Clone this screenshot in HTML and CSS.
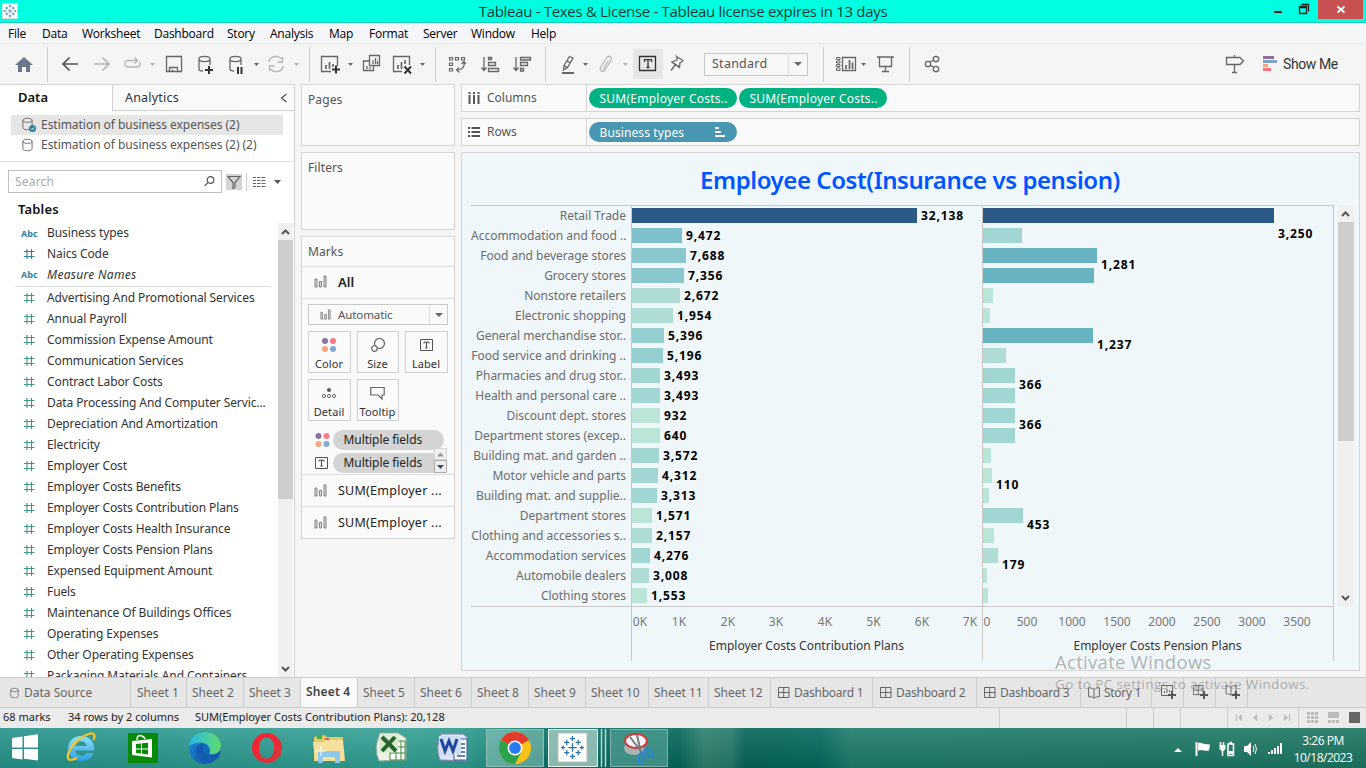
FILE: index.html
```html
<!DOCTYPE html>
<html lang="en">
<head>
<meta charset="utf-8">
<title>Tableau - Texes &amp; License</title>
<link rel="stylesheet" href="styles.css">
</head>
<body>
<svg width="0" height="0" class="defs">
  <defs>
    <symbol id="cyl" viewBox="0 0 12 14"><path d="M1 3v8c0 3 10 3 10 0V3M1 3c0-3 10-3 10 0S1 6 1 3z" fill="none" stroke="#666"/></symbol>
    <symbol id="hash" viewBox="0 0 12 12"><path d="M4 1v10M8.500 1v10M1 3.500h10.500M1 8.500h10.500" fill="none" stroke="currentColor" stroke-width="1.100"/></symbol>
    <symbol id="bars" viewBox="0 0 13 13"><path d="M1 4h2v8H1zM5.500 6.500h2v5.500h-2zM10 1h2v11h-2z" fill="#ddd" stroke="#777" stroke-width=".9"/></symbol>
    <symbol id="dash" viewBox="0 0 12 12"><path d="M.5.5h10.500v10H.5zM5.700.5v10M.5 5.500H11" fill="none" stroke="#666"/></symbol>
    <symbol id="book" viewBox="0 0 12 12"><path d="M6 2.500C4 1 2 .7.6.7v9c2 0 4 .3 5.400 1.500 1.400-1.200 3.400-1.500 5.400-1.500v-9C9.500.7 7.500 1 6 2.500zv8.500" fill="none" stroke="#666"/></symbol>
    <symbol id="plus" viewBox="0 0 8 8"><path d="M4 0v8M0 4h8" stroke="#555" stroke-width="2"/></symbol>
    <symbol id="dots" viewBox="0 0 14 14"><circle cx="3" cy="3" r="3" fill="#8b739e"/><circle cx="11" cy="3" r="3" fill="#fb7a87"/><circle cx="3" cy="11" r="3" fill="#f4a77e"/><circle cx="11" cy="11" r="3" fill="#84a8d0"/></symbol>
    <symbol id="tbox" viewBox="0 0 13 12"><path d="M.5.5h12v11H.5z" fill="none" stroke="#555"/><path d="M4 4.500V3.200h5v1.300M6.500 3.200v5.600M5.300 9h2.400" fill="none" stroke="#444"/></symbol>
    <symbol id="tab" viewBox="0 0 24 24"><path d="M12 8v8M8 12h8M12 1v5M9.500 3.500h5M12 18v5M9.500 20.500h5M1 12h4M3 10v4M19 12h4M21 10v4M6.500 4.500v5M4 7h5M17.500 4.500v5M15 7h5M6.500 14.500v5M4 17h5M17.500 14.500v5M15 17h5" fill="none" stroke="#2a72a8" stroke-width="1.200"/></symbol>
  </defs>
</svg>

<div class="titlebar">
  <svg class="appicon" width="16" height="16"><rect width="16" height="16" fill="#fff" stroke="#9bb"/><svg x="1" y="1" width="14" height="14"><use href="#tab"/></svg></svg>
  <span class="apptitle">Tableau - Texes &amp; License - Tableau license expires in 13 days</span>
  <svg class="winbtns" width="96" height="20" viewBox="1270 0 96 20"><path d="M1274 11h8v2h-8z" fill="#222"/><path d="M1299.500 6.500h7v7h-7zM1302 5V4.500h6.500v7M1299 7.500h8" fill="none" stroke="#222" stroke-width="1.300"/><path d="M1318 0h45v19h-45z" fill="#c75050"/><path d="M1337.500 6.500l7 6M1344.500 6.500l-7 6" stroke="#fff" stroke-width="1.900"/></svg>
</div>
<nav class="menu"><span class="w1">File</span><span class="w2">Data</span><span class="w3">Worksheet</span><span class="w4">Dashboard</span><span class="w5">Story</span><span class="w6">Analysis</span><span class="w7">Map</span><span class="w8">Format</span><span class="w9">Server</span><span class="w10">Window</span><span>Help</span></nav>

<div class="toolbar">
  <svg width="704" height="40" viewBox="0 44 704 40" fill="none" stroke="#666" stroke-width="1.300">
    <path d="M47.500 47v35M309.500 47v35M435.500 47v35M545.500 47v35" stroke="#ccc" stroke-width="1"/>
    <path d="M24 57l9 8h-3v7h-4v-5h-4v5h-4v-7h-3z" fill="#69788a" stroke="none"/>
    <path d="M78 64H63M69.500 57.500L63 64l6.500 6.500" stroke="#555" stroke-width="1.700"/>
    <g stroke="#b3b3b3"><path d="M94 64h15M102.500 57.500L109 64l-6.500 6.500" stroke-width="1.600"/><path d="M131 60.500h-4a3.500 3.500 0 0 0 0 6.500h10a3 3 0 0 0 2.500-5M130 60.500h7M134.500 57.500l3 3-3 3"/><path d="M268.500 62a7.500 7.500 0 0 1 13-3M283.500 66a7.500 7.500 0 0 1-13 3M282.500 57v5h-5M269.500 71v-5h5"/></g>
    <path d="M150 63h5l-2.500 3zM294 63h5l-2.500 3zM623 63h5l-2.500 3z" fill="#b3b3b3" stroke="none"/>
    <path d="M254 63h5l-2.500 3zM348 63h5l-2.500 3zM420 63h5l-2.500 3zM583 63h5l-2.500 3z" fill="#666" stroke="none"/>
    <path d="M166.500 56.500h15v15h-15zM169.500 71v-3.500h8V71M172.500 71v-1.500"/>
    <path d="M199 59v10c0 1 1 2 4 2M210 59v6M199 59c0-3.500 11-3.500 11 0s-11 3.500-11 0z"/><path d="M209 66v8M205 70h8" stroke="#333" stroke-width="2"/>
    <path d="M230 59v10c0 1 1 2 4 2M241 59v6M230 59c0-3.500 11-3.500 11 0s-11 3.500-11 0z"/><path d="M238 67v7M241.500 67v7" stroke="#333" stroke-width="2"/>
    <path d="M331 71.500h-9.500v-15h16V66"/><path d="M326 65v4M329.500 62v7M333 64v3" stroke-width="1.700"/><path d="M336 65.500v8M332 69.500h8" stroke="#333" stroke-width="2"/>
    <path d="M369.500 55.500h10v10h-10zM369 61h-5.500v9.500h10V66M367 66v3M370 67v2M373 60v4M375.500 58v6M377.500 61v3"/>
    <path d="M402 71.500h-8.500v-15h16V65"/><path d="M398 65v4M401.500 62v7M405 60v4" stroke-width="1.700"/><path d="M404.500 66.500l6.500 7M411 66.500l-6.500 7" stroke="#333" stroke-width="2"/>
    <path d="M449.500 57.500h3v2.500h-3zM455.500 57.500h3v2.500h-3zM461.500 57.500h3v2.500h-3zM449.500 63h3v2.500h-3zM449.500 68.500h3V71h-3zM464 62c1 5-2 8-7 8M461.500 64l2.500-2.500 2 2.500M459 67.500l-2.500 2.500 3 2.500" stroke-width="1.200"/>
    <path d="M484 57v13M481.500 67.500l2.500 3 2.500-3M488.500 57.500h3v2h-3zM488.500 62.500h7v3h-7zM488.500 68.500h10v3h-10z"/>
    <path d="M516 57v13M513.500 67.500l2.500 3 2.500-3M520.500 57.500h10v2.500h-10zM520.500 62.500h7v3h-7zM520.500 68.500h3v2.500h-3z"/>
    <path d="M564 65.500l5.500-9 3.500 1.500-5.500 9.500zM564 65.500l-.5 4.500 4-2.500M567 61l3.500 2"/><path d="M562 73h12" stroke-width="2"/>
    <path d="M608.500 60.500l-4.500 7c-1 1.500 1 2.500 2 1l5-8c2-3.500-2.500-5.500-4.500-2.500l-5.500 8.500c-2.500 4 2.500 6.500 4.500 3.500" stroke="#b3b3b3" stroke-width="1.200"/>
    <path d="M633 49h30v30h-30z" fill="#e6e6e6" stroke="none"/><path d="M639.500 56.500h16v14h-16z" stroke="#333"/><path d="M644.500 62v-2.300h7V62M648 60v7.500M646.500 67.500h3" stroke="#333"/>
    <path d="M676.500 56.500l6.500 4-1.500 1.500-1.500.5-.5 4.500-7.500-5 4-1.500 1.500-2zM675.500 64.500l-4.500 6M671.500 62l8.500 6"/>
  </svg>
  <div class="select"><span>Standard</span><i><b class="caret"></b></i></div>
  <svg width="472" height="40" viewBox="810 44 472 40" fill="none" stroke="#666" stroke-width="1.300">
    <path d="M823.500 47v35M909.500 47v35" stroke="#ccc" stroke-width="1"/>
    <path d="M836.500 57.500h3.500v2h-3.500zM836.500 61h3.500v2h-3.500zM836.500 64.500h3.500v2h-3.500zM836.500 68h3.500v2.500h-3.500z" stroke-width="1"/><path d="M842.500 57.500h13v13h-13z"/><path d="M846 65v4M849.500 60v9M852.500 62.500v6.500" stroke-width="1.700"/><path d="M861 63h5l-2.500 3z" fill="#666" stroke="none"/>
    <path d="M877 57h17M879.500 57v9.500h12V57M885.500 66.500V71M882 71.500h7"/>
    <path d="M930 62l4-2M930 65l4 2.500"/><circle cx="928" cy="64" r="2.700"/><circle cx="936" cy="59" r="2.700"/><circle cx="936" cy="69" r="2.700"/>
    <path d="M1226.500 57.500h13.500l3.500 3.500-3.500 3.500h-13.500zM1234.500 55v2M1234.500 65v7M1232 72.500h5"/>
    <g stroke="none"><path d="M1263 56h11v3h-11z" fill="#8b739e"/><path d="M1263 60h14v3h-14z" fill="#7da1cb"/><path d="M1263 64h5v3h-5z" fill="#f4a77e"/><path d="M1263 68h8v3h-8z" fill="#fb7082"/></g>
  </svg>
  <span class="showme">Show Me</span>
</div>

<div class="main">
  <aside class="data">
    <div class="tabs"><b>Data</b><span>Analytics<svg width="8" height="10" viewBox="0 0 8 10"><path d="M6.500 1L1.500 5l5 4" fill="none" stroke="#555" stroke-width="1.300"/></svg></span></div>
    <div class="sources">
      <div class="src on"><svg width="15" height="15"><svg width="11" height="14"><use href="#cyl"/></svg><circle cx="10.500" cy="11.500" r="3.500" fill="#2f7f9f"/><path d="M9 11.500l1.200 1.200 2-2.400" stroke="#fff" fill="none"/></svg><span>Estimation of business expenses (2)</span></div>
      <div class="src"><svg width="15" height="14"><svg width="11" height="14"><use href="#cyl"/></svg></svg><span>Estimation of business expenses (2) (2)</span></div>
    </div>
    <div class="searchrow">
      <div class="search"><span>Search</span><svg width="11" height="11" viewBox="0 0 11 11" fill="none" stroke="#555" stroke-width="1.200"><circle cx="6.500" cy="4" r="3.300"/><path d="M4 6.500L.7 9.800"/></svg></div>
      <svg width="60" height="18" viewBox="226 172 60 18" fill="none" stroke="#666"><path d="M226 173h16v16h-16z" fill="#d4d4d4" stroke="none"/><path d="M228 175.500h12l-5 6v5l-2 1v-6z" stroke-width="1.200"/><path d="M246.500 172v18" stroke="#ccc"/><path d="M253 176.500h3M257 176.500h3.500M261.500 176.500h4M253 179.500h3M257 179.500h3.500M261.500 179.500h4M253 182.500h3M257 182.500h3.500M261.500 182.500h4M253 185.500h3M257 185.500h3.500M261.500 185.500h4"/><path d="M274 179h7l-3.500 4z" fill="#555" stroke="none"/></svg>
    </div>
    <h2>Tables</h2>
    <div class="fieldwrap">
      <div class="fields">
        <div class="f dim"><em>Abc</em><span>Business types</span></div>
        <div class="f dim"><svg width="12" height="12"><use href="#hash"/></svg><span>Naics Code</span></div>
        <div class="f dim last"><em>Abc</em><span class="it">Measure Names</span></div>
        <div class="f"><svg width="12" height="12"><use href="#hash"/></svg><span>Advertising And Promotional Services</span></div>
        <div class="f"><svg width="12" height="12"><use href="#hash"/></svg><span>Annual Payroll</span></div>
        <div class="f"><svg width="12" height="12"><use href="#hash"/></svg><span>Commission Expense Amount</span></div>
        <div class="f"><svg width="12" height="12"><use href="#hash"/></svg><span>Communication Services</span></div>
        <div class="f"><svg width="12" height="12"><use href="#hash"/></svg><span>Contract Labor Costs</span></div>
        <div class="f"><svg width="12" height="12"><use href="#hash"/></svg><span>Data Processing And Computer Servic...</span></div>
        <div class="f"><svg width="12" height="12"><use href="#hash"/></svg><span>Depreciation And Amortization</span></div>
        <div class="f"><svg width="12" height="12"><use href="#hash"/></svg><span>Electricity</span></div>
        <div class="f"><svg width="12" height="12"><use href="#hash"/></svg><span>Employer Cost</span></div>
        <div class="f"><svg width="12" height="12"><use href="#hash"/></svg><span>Employer Costs Benefits</span></div>
        <div class="f"><svg width="12" height="12"><use href="#hash"/></svg><span>Employer Costs Contribution Plans</span></div>
        <div class="f"><svg width="12" height="12"><use href="#hash"/></svg><span>Employer Costs Health Insurance</span></div>
        <div class="f"><svg width="12" height="12"><use href="#hash"/></svg><span>Employer Costs Pension Plans</span></div>
        <div class="f"><svg width="12" height="12"><use href="#hash"/></svg><span>Expensed Equipment Amount</span></div>
        <div class="f"><svg width="12" height="12"><use href="#hash"/></svg><span>Fuels</span></div>
        <div class="f"><svg width="12" height="12"><use href="#hash"/></svg><span>Maintenance Of Buildings Offices</span></div>
        <div class="f"><svg width="12" height="12"><use href="#hash"/></svg><span>Operating Expenses</span></div>
        <div class="f"><svg width="12" height="12"><use href="#hash"/></svg><span>Other Operating Expenses</span></div>
        <div class="f"><svg width="12" height="12"><use href="#hash"/></svg><span>Packaging Materials And Containers</span></div>
      </div>
      <div class="scroll"><svg width="15" height="17"><path d="M4 11l3.500-3.500L11 11" fill="none" stroke="#555" stroke-width="2"/></svg><i class="t1"></i><svg class="down" width="15" height="17"><path d="M4 7l3.500 3.500L11 7" fill="none" stroke="#555" stroke-width="2"/></svg></div>
    </div>
  </aside>

  <section class="cards">
    <div class="card pages">Pages</div>
    <div class="card filters">Filters</div>
    <div class="card marks">
      <div class="mh">Marks</div>
      <div class="mrow all"><svg width="13" height="13"><use href="#bars"/></svg><b>All</b></div>
      <div class="auto"><svg width="11" height="11"><use href="#bars"/></svg><span>Automatic</span><i><b class="caret"></b></i></div>
      <div class="btns">
        <div><svg width="14" height="14"><use href="#dots"/></svg><span>Color</span></div>
        <div><svg width="14" height="14" viewBox="0 0 14 14" fill="none" stroke="#666" stroke-width="1.200"><circle cx="8.500" cy="5.500" r="5"/><circle cx="3.500" cy="10.500" r="2.800" fill="#fafafa"/></svg><span>Size</span></div>
        <div><svg width="13" height="14" viewBox="0 -1 13 14"><use href="#tbox" width="13" height="12"/></svg><span>Label</span></div>
        <div><svg width="14" height="14" viewBox="0 0 14 14" fill="none" stroke="#666"><circle cx="7" cy="4" r="2" fill="#555" stroke="none"/><circle cx="2" cy="10" r="1.600"/><circle cx="7" cy="10" r="1.600"/><circle cx="12" cy="10" r="1.600"/></svg><span>Detail</span></div>
        <div><svg width="15" height="14" viewBox="0 0 15 14"><path d="M.7 1.500h13.500V9H12v4L8 9H.7z" fill="none" stroke="#666" stroke-width="1.200"/></svg><span>Tooltip</span></div>
      </div>
      <div class="pillrow"><svg width="15" height="14"><use href="#dots"/></svg><span>Multiple fields</span></div>
      <div class="pillrow two"><svg width="13" height="12"><use href="#tbox"/></svg><span>Multiple fields</span>
        <svg class="spin" width="13" height="25"><path d="M.5.5h12v11H.5z" fill="#f0f0f0" stroke="#d5d5d5"/><path d="M.5 12.500h12v12H.5z" fill="#eee" stroke="#aaa"/><path d="M3 8.500h7l-3.500-4z" fill="#999"/><path d="M3 17h7l-3.500 4z" fill="#3c4f66"/></svg></div>
      <div class="mrow sum"><svg width="13" height="13"><use href="#bars"/></svg><span>SUM(Employer ...</span></div>
      <div class="mrow sum"><svg width="13" height="13"><use href="#bars"/></svg><span>SUM(Employer ...</span></div>
    </div>
  </section>

  <section class="work">
    <div class="shelf"><div class="sl"><svg width="12" height="12" viewBox="0 0 12 12"><path d="M1.500 0v2M6 0v2M10.500 0v2M1.500 3v9M6 3v9M10.500 3v9" stroke="#555" stroke-width="2"/></svg>Columns</div><span class="pill g">SUM(Employer Costs..</span><span class="pill g">SUM(Employer Costs..</span></div>
    <div class="shelf"><div class="sl"><svg width="12" height="12" viewBox="0 0 12 12"><path d="M0 2h2M0 6h2M0 10h2M3.500 2H12M3.500 6H12M3.500 10H12" stroke="#555" stroke-width="1.800"/></svg>Rows</div><span class="pill b">Business types<svg width="11" height="10" viewBox="0 0 11 10"><path d="M0 1h4M0 5h6M0 9h10" stroke="#fff" stroke-width="2"/></svg></span></div>
    <div class="view">
      <h1>Employee Cost(Insurance vs pension)</h1>
      <div class="chart">
        <div class="plot">
          <div class="r"><span>Retail Trade</span><div><i style="width:285px;background:#2c5985"></i><b>32,138</b></div><div><i style="width:291px;background:#2c5985"></i><b class="low2">3,250</b></div></div>
          <div class="r"><span>Accommodation and food ..</span><div><i style="width:50px;background:#7fc1cb"></i><b>9,472</b></div><div><i style="width:39px;background:#a2d6d2"></i></div></div>
          <div class="r"><span>Food and beverage stores</span><div><i style="width:54px;background:#8ac8ce"></i><b>7,688</b></div><div><i style="width:114px;background:#67b3c2"></i><b class="low">1,281</b></div></div>
          <div class="r"><span>Grocery stores</span><div><i style="width:52px;background:#8ac8ce"></i><b>7,356</b></div><div><i style="width:111px;background:#67b3c2"></i></div></div>
          <div class="r"><span>Nonstore retailers</span><div><i style="width:48px;background:#afddd5"></i><b>2,672</b></div><div><i style="width:10px;background:#bbe5d9"></i></div></div>
          <div class="r"><span>Electronic shopping</span><div><i style="width:41px;background:#afddd5"></i><b>1,954</b></div><div><i style="width:7px;background:#bbe5d9"></i></div></div>
          <div class="r"><span>General merchandise stor..</span><div><i style="width:32px;background:#96cfd0"></i><b>5,396</b></div><div><i style="width:110px;background:#67b3c2"></i><b class="low">1,237</b></div></div>
          <div class="r"><span>Food service and drinking ..</span><div><i style="width:31px;background:#96cfd0"></i><b>5,196</b></div><div><i style="width:23px;background:#afddd5"></i></div></div>
          <div class="r"><span>Pharmacies and drug stor..</span><div><i style="width:28px;background:#a2d6d2"></i><b>3,493</b></div><div><i style="width:32px;background:#a2d6d2"></i><b class="low">366</b></div></div>
          <div class="r"><span>Health and personal care ..</span><div><i style="width:28px;background:#a2d6d2"></i><b>3,493</b></div><div><i style="width:32px;background:#a2d6d2"></i></div></div>
          <div class="r"><span>Discount dept. stores</span><div><i style="width:28px;background:#bbe5d9"></i><b>932</b></div><div><i style="width:32px;background:#a2d6d2"></i><b class="low">366</b></div></div>
          <div class="r"><span>Department stores (excep..</span><div><i style="width:28px;background:#bbe5d9"></i><b>640</b></div><div><i style="width:32px;background:#a2d6d2"></i></div></div>
          <div class="r"><span>Building mat. and garden ..</span><div><i style="width:27px;background:#a2d6d2"></i><b>3,572</b></div><div><i style="width:8px;background:#bbe5d9"></i></div></div>
          <div class="r"><span>Motor vehicle and parts</span><div><i style="width:26px;background:#a2d6d2"></i><b>4,312</b></div><div><i style="width:9px;background:#bbe5d9"></i><b class="low">110</b></div></div>
          <div class="r"><span>Building mat. and supplie..</span><div><i style="width:25px;background:#a2d6d2"></i><b>3,313</b></div><div><i style="width:6px;background:#bbe5d9"></i></div></div>
          <div class="r"><span>Department stores</span><div><i style="width:20px;background:#bbe5d9"></i><b>1,571</b></div><div><i style="width:40px;background:#a2d6d2"></i><b class="low">453</b></div></div>
          <div class="r"><span>Clothing and accessories s..</span><div><i style="width:20px;background:#afddd5"></i><b>2,157</b></div><div><i style="width:11px;background:#bbe5d9"></i></div></div>
          <div class="r"><span>Accommodation services</span><div><i style="width:18px;background:#a2d6d2"></i><b>4,276</b></div><div><i style="width:15px;background:#afddd5"></i><b class="low">179</b></div></div>
          <div class="r"><span>Automobile dealers</span><div><i style="width:17px;background:#afddd5"></i><b>3,008</b></div><div><i style="width:4px;background:#bbe5d9"></i></div></div>
          <div class="r"><span>Clothing stores</span><div><i style="width:15px;background:#bbe5d9"></i><b>1,553</b></div><div><i style="width:5px;background:#bbe5d9"></i></div></div>
          <svg class="axis" width="863" height="55" viewBox="471 606 863 55">
            <path d="M471 606.500h863M631.500 606v55M982.500 606v55M1333.500 606v55" stroke="#c8c8c8"/>
            <g class="tick"><text x="640" y="626">0K</text><text x="679" y="626">1K</text><text x="728" y="626">2K</text><text x="776" y="626">3K</text><text x="825" y="626">4K</text><text x="873.500" y="626">5K</text><text x="922" y="626">6K</text><text x="970" y="626">7K</text><text x="987" y="626">0</text><text x="1027" y="626">500</text><text x="1072" y="626">1000</text><text x="1117" y="626">1500</text><text x="1162" y="626">2000</text><text x="1207" y="626">2500</text><text x="1252" y="626">3000</text><text x="1297" y="626">3500</text></g>
            <g class="axt"><text x="806.500" y="650" textLength="195">Employer Costs Contribution Plans</text><text x="1157.500" y="650" textLength="168">Employer Costs Pension Plans</text></g>
          </svg>
        </div>
        <div class="scroll sc2"><svg width="15" height="17"><path d="M4 11l3.500-3.500L11 11" fill="none" stroke="#555" stroke-width="2"/></svg><i class="t2"></i><svg class="down" width="15" height="17"><path d="M4 7l3.500 3.500L11 7" fill="none" stroke="#555" stroke-width="2"/></svg></div>
      </div>
    </div>
  </section>
</div>

<div class="sheets">
  <span class="ds"><svg width="9" height="12" viewBox="0 0 12 14"><use href="#cyl"/></svg>Data Source</span><span class="s1">Sheet 1</span><span class="s">Sheet 2</span><span class="s">Sheet 3</span><b class="s">Sheet 4</b><span class="s">Sheet 5</span><span class="s">Sheet 6</span><span class="s">Sheet 8</span><span class="s">Sheet 9</span><span class="l1">Sheet 10</span><span class="l2">Sheet 11</span><span class="l3">Sheet 12</span>
  <span class="d1"><svg width="12" height="12"><use href="#dash"/></svg>Dashboard 1</span><span class="d2"><svg width="12" height="12"><use href="#dash"/></svg>Dashboard 2</span><span class="d2"><svg width="12" height="12"><use href="#dash"/></svg>Dashboard 3</span><span class="st"><svg width="12" height="12"><use href="#book"/></svg>Story 1</span>
  <span class="n"><svg width="16" height="16"><path d="M9 10.500H.5V.5h11V6M3.500 6v2M6 4v4M8.500 5v2" fill="none" stroke="#666"/><use href="#plus" x="7" y="6" width="8" height="8"/></svg></span><span class="n"><svg width="16" height="16"><use href="#dash" width="11" height="11"/><use href="#plus" x="7" y="6" width="8" height="8"/></svg></span><span class="n"><svg width="16" height="16"><use href="#book" width="12" height="11"/><use href="#plus" x="7" y="6" width="8" height="8"/></svg></span>
</div>
<div class="status"><span class="a1">68 marks</span><span class="a2">34 rows by 2 columns</span><span>SUM(Employer Costs Contribution Plans): 20,128</span>
  <svg width="367" height="20" viewBox="999 708 367 20"><path d="M999.500 708v20M1126.500 708v20M1153.500 708v20M1180.500 708v20M1227.500 708v20M1298.500 708v20" stroke="#ccc"/><g fill="#bbb"><path d="M1236 714h1v7h-1zM1242 714v7l-4-3.500zM1257 714v7l-4-3.500zM1269 714v7l4-3.500zM1284 714v7l4-3.500zM1289 714h1v7h-1zM1307 712h3v3h-3zM1311 712h3v3h-3zM1315 712h3v3h-3zM1307 716h3v3h-3zM1311 716h3v3h-3zM1315 716h3v3h-3zM1307 720h3v3h-3zM1311 720h3v3h-3zM1315 720h3v3h-3zM1328 712h11v6h-11zM1328 720h3v3h-3zM1332 720h3v3h-3zM1336 720h3v3h-3z"/></g><path d="M1349 712h11v11h-11z" fill="#666"/></svg>
</div>

<div class="taskbar">
  <svg width="700" height="40" viewBox="0 728 700 40">
    <defs><linearGradient id="gl" x2="0" y2="1"><stop stop-color="#bfe0dc" stop-opacity=".4"/><stop offset="1" stop-color="#9fcfc8" stop-opacity=".5"/></linearGradient><linearGradient id="ed" x2="1" y2="1"><stop stop-color="#1b8fe0"/><stop offset="1" stop-color="#0c4a9a"/></linearGradient><linearGradient id="ed2" x2="1"><stop stop-color="#2ab7e8"/><stop offset="1" stop-color="#5fdc6a"/></linearGradient><linearGradient id="op" x2="1" y2="1"><stop stop-color="#ff1b2d"/><stop offset="1" stop-color="#d63a3a"/></linearGradient><linearGradient id="ie" x2="0" y2="1"><stop stop-color="#8fe0fb"/><stop offset="1" stop-color="#2f9fe0"/></linearGradient></defs>
    <path d="M12 738l10.500-1.500v11H12zM24 736.200l14-2v13.300H24zM12 749h10.500v10.500L12 758zM24 749h14v11.500l-14-1.800z" fill="#fff"/>
    <path d="M81 736c-8 0-13 5.500-13 12.500S73 761 81.500 761c6 0 10-3 12-8h-7c-1 2-3 2.800-5 2.800-3.500 0-6-2-6-5.300h18.800c.5-9-5-14.500-13.300-14.500zm-5.500 10c.5-3 2.500-4.700 5.500-4.700s5.200 1.700 5.500 4.700z" fill="url(#ie)"/><path d="M93.500 740c2-5 1-8-5-6-9 3-19 13-20.500 21-1 5 2 6.500 9 3" fill="none" stroke="#f0c62c" stroke-width="2.300"/>
    <path d="M128 733h30v30h-30z" fill="#078a07"/><path d="M132 741l20-2v18.500l-20-2.500z" fill="#fff"/><path d="M137 740c0-5 3-5 5-4s3 2 3 3" fill="none" stroke="#fff" stroke-width="1.400"/><path d="M136 744l5-.5v5h-5zM142 743.300l6-.6v5.800h-6zM136 749.500h5v4l-5-.5zM142 749.500h6v5l-6-.7z" fill="#078a07"/>
    <circle cx="205" cy="748" r="16" fill="url(#ed)"/><path d="M189 747c1-10 8-15 16-15 10 0 16 7 16 14s-6 9-12 8c2-3 1-10-6-11-6-1-12 1-14 4z" fill="url(#ed2)"/><path d="M196 751c0 8 7 12 12 12 5-1 9-3 11-7-6 2-16 0-16-8 0-2 1-3 2-4-5-1-9 2-9 7z" fill="#145cae"/>
    <path d="M267 733a15 15 0 1 0 0 30a15 15 0 1 0 0-30zm-.5 4.500c4.500 0 7.500 4.500 7.500 10.500s-3 10.500-7.500 10.500-7.500-4.500-7.500-10.500 3-10.500 7.500-10.500z" fill="url(#op)" fill-rule="evenodd"/>
    <path d="M314 737l10-2 3 2h16v24h-29z" fill="#e8c765"/><path d="M317 735h5v4h-5z" fill="#35b34a"/><path d="M325 738h4v3h-4z" fill="#e55"/><path d="M332 740h4v3h-4z" fill="#48d"/><path d="M313 742h10l3-2h17l2 21h-30z" fill="#f6e29d"/><path d="M318 763v-10q0-2 2-2h17q3 0 3 2v10h-5v-6h-12v6z" fill="#8fc9ea"/><path d="M321 746v10M316 751h10" stroke="#fff"/>
    <path d="M380 733h18l8 5v22l-27 1q-6-13 1-28z" fill="#edf3e4" stroke="#8a9"/><path d="M390 741h15v19h-15z" fill="#fff" stroke="#3a8a35"/><path d="M390 747h15M390 753h15M396 741v19M401 741v19" stroke="#3a8a35"/><path d="M379 735h20l-1 17-19 1z" fill="#dcebcf"/><path d="M382 737l14 14M395 737l-13 14" stroke="#22662b" stroke-width="4"/>
    <path d="M441 734h22l4 3v24l-27-1q-5-13 1-26z" fill="#dbe5f5" stroke="#88a"/><path d="M454 739h13v21h-13z" fill="#fff" stroke="#2c57a8"/><path d="M457 744h8M457 748h8M457 752h8M457 756h8" stroke="#2c57a8" stroke-width="1.500"/><path d="M439 736h22v19h-22z" fill="#cfdcf3"/><path d="M441 739l4 12 4-10 4 10 4-12" fill="none" stroke="#1e469c" stroke-width="3"/>
    <path d="M486.500 729.500h57v37h-57z" fill="url(#gl)" stroke="#8cbdb6"/>
    <circle cx="515" cy="748" r="16" fill="#fbc116"/><path d="M515 748l-13.900-8a16 16 0 0 1 27.800 0z" fill="#e33b2e"/><path d="M501.100 740a16 16 0 0 0 13.900 24l6.500-12-6.500-4z" fill="#2ba24c"/><path d="M515 740h13.900" stroke="#e33b2e"/><circle cx="515" cy="748" r="7.500" fill="#fff"/><circle cx="515" cy="748" r="5.900" fill="#2a7af0"/>
    <path d="M548.500 729.500h49v37h-49z" fill="#a9cdc6" fill-opacity=".8" stroke="#e6f4f1"/><path d="M601.500 729v38M605.500 729v38" stroke="#b9d8d3" stroke-width="1.500"/><path d="M558 733h29v29h-29z" fill="#fff" stroke="#bbb"/><use href="#tab" x="560" y="735" width="25" height="25"/>
    <path d="M610.500 729.500h57v37h-57z" fill="#4f9d92" fill-opacity=".75" stroke="#7fb3ab"/><ellipse cx="634" cy="748" rx="10" ry="7" fill="#a9b5b3"/><ellipse cx="636" cy="741" rx="11" ry="7" fill="#f5f5fa" stroke="#d23b3b" stroke-width="2"/><path d="M630 737l13 17M637 735l4 18" stroke="#777" stroke-width="2"/><ellipse cx="641" cy="758" rx="2.500" ry="5" fill="none" stroke="#2a83d8" stroke-width="2" transform="rotate(15 641 758)"/><ellipse cx="649" cy="753" rx="2.500" ry="5" fill="none" stroke="#2a83d8" stroke-width="2" transform="rotate(-50 649 753)"/>
  </svg>
  <div class="tray">
    <svg width="115" height="24" viewBox="1168 736 115 24"><path d="M1171 752h8l-4-4z" fill="#fff"/><path d="M1193.500 742v14" stroke="#fff" stroke-width="2"/><path d="M1195 743c4-1 5 1 7 1l5 .5-1 6c-4 1-6-1-11 0z" fill="#fff"/><path d="M1217.500 742v3M1220.500 742v3M1219.500 750v6" stroke="#fff" stroke-width="1.500"/><path d="M1216.500 745h6v4l-2 2h-2l-2-2z" fill="#fff"/><path d="M1225 744h5.500v11.500h-5.500zM1226.500 742.500h2.500" fill="none" stroke="#fff" stroke-width="1.600"/><path d="M1226 751h4v3h-4z" fill="#fff"/><path d="M1241 746h3l4-4v14l-4-4h-3z" fill="#fff"/><path d="M1250 746q2 3 0 6M1252 744q3 5 0 10" fill="none" stroke="#fff"/><path d="M1265 752h2v2h-2zM1268 750h2v4h-2zM1271 748h2v6h-2zM1274 746h2v8h-2zM1277 743h2v11h-2z" fill="#fff"/></svg>
    <div class="clock">3:26 PM<br>10/18/2023</div>
  </div>
</div>
<div class="activate"><div>Activate Windows</div><p>Go to PC settings to activate Windows.</p></div>
</body>
</html>
```
FILE: styles.css
```css
* { box-sizing: border-box; }
body { margin: 0; width: 1366px; height: 768px; overflow: hidden; position: relative; background: #f5f5f5; font-family: "Noto Sans", "Open Sans", sans-serif; font-size: 12px; color: #222; }
svg { display: block; flex: none; }
.defs { position: absolute; }
i { font-style: normal; }
.titlebar { height: 23px; background: #00ffe1; border-bottom: 1px solid #12cfb9; display: flex; align-items: flex-start; justify-content: space-between; }
.appicon { margin: 3px 0 0 2px; }
.apptitle { font: 15px/22px "Open Sans", sans-serif; color: #123c3a; margin-left: 78px; letter-spacing: -.31px; white-space: nowrap; }
.menu { height: 21px; background: #f5f6f8; border-bottom: 1px solid #e8e8e8; padding-left: 8px; display: flex; font: 12px/21px "Open Sans", sans-serif; letter-spacing: -.24px; color: #000; }
.w1 { width: 34px; } .w2 { width: 40px; } .w3 { width: 72px; } .w4 { width: 73px; } .w5 { width: 43px; } .w6 { width: 59px; } .w7 { width: 40px; } .w8 { width: 54px; } .w9 { width: 48px; } .w10 { width: 60px; }
.toolbar { height: 40px; display: flex; align-items: center; }
.select { width: 104px; height: 23px; margin: 0 2px 0 0; border: 1px solid #c8c8c8; background: #f7f7f7; display: flex; align-items: center; justify-content: space-between; padding-left: 7px; font-size: 12.500px; letter-spacing: .25px; line-height: 18px; padding-bottom: 1px; color: #555; }
.select i { width: 19px; height: 21px; border-left: 1px solid #ddd; display: flex; align-items: center; justify-content: center; }
.caret { border: 4px solid transparent; border-top-color: #666; border-bottom: 0; }
.showme { margin-left: 1px; font: 14px "Roboto", sans-serif; color: #333; letter-spacing: -.4px; }
.main { height: 593px; display: flex; }
.data { width: 295px; background: #fff; border-right: 1px solid #d0d0d0; border-top: 1px solid #d4d4d4; display: flex; flex-direction: column; }
.tabs { height: 26px; display: flex; line-height: 25px; flex: none; }
.tabs b { width: 112px; padding-left: 18px; font-size: 13px; font-weight: 600; color: #111; }
.tabs span { flex: 1; display: flex; justify-content: space-between; align-items: center; padding: 0 6px 0 12px; background: #fafafa; border: solid #d0d0d0; border-width: 0 0 1px 1px; font-size: 12.500px; letter-spacing: .2px; color: #333; }
.sources { height: 51px; padding: 4px 11px 0; border-bottom: 1px solid #e0e0e0; flex: none; }
.src { height: 20px; display: flex; align-items: center; gap: 4px; padding-left: 11px; color: #555; letter-spacing: -.04px; line-height: 18px; padding-bottom: 1px; }
.src.on { background: #e6e6e6; }
.searchrow { display: flex; align-items: center; gap: 4px; padding: 8px 0 0 8px; flex: none; }
.search { width: 214px; height: 23px; border: 1px solid #c0c0c0; display: flex; align-items: center; justify-content: space-between; padding: 0 6px; color: #aaa; letter-spacing: .2px; }
h2 { font-size: 13px; font-weight: 600; margin: 7px 0 0 18px; line-height: 18px; letter-spacing: .15px; color: #111; flex: none; }
.fieldwrap { flex: 1; display: flex; min-height: 0; margin-top: 5px; }
.fields { flex: 1; overflow: hidden; }
.f { height: 21px; display: flex; align-items: center; padding-left: 23px; color: #3c9c7a; white-space: nowrap; line-height: 17px; }
.f:first-child { margin-top: -1px; }
.f span { color: #333; margin-left: 12px; letter-spacing: -.1px; }
.f em { font: bold 9px "Open Sans", sans-serif; margin-left: -2px; width: 26px; padding-top: 1px; }
.f em + span { margin-left: 0; }
.f .it { font-style: italic; letter-spacing: .3px; }
.dim { color: #2f7f9f; }
.last { height: 23px; padding-bottom: 2px; margin-bottom: 0; border-bottom: 1px solid #ddd; margin-left: 15px; padding-left: 8px; margin-right: 7px; }
.scroll { width: 15px; background: #f0f0f0; display: flex; flex-direction: column; margin-right: 1px; }
.scroll i { background: #cdcdcd; }
.t1 { height: 259px; } .t2 { height: 219px; }
.down { margin-top: auto; }
.cards { width: 154px; margin-left: 6px; display: flex; flex-direction: column; color: #555; letter-spacing: .1px; }
.card { background: #fafafa; border: 1px solid #d4d4d4; padding: 6px 6px; line-height: 18px; }
.pages { height: 62px; margin-bottom: 6px; } .filters { height: 78px; margin-bottom: 6px; }
.marks { height: 303px; padding: 0; }
.mh { height: 30px; padding: 6px; border-bottom: 1px solid #ddd; }
.mrow { height: 32px; display: flex; align-items: center; padding-left: 12px; gap: 11px; border-bottom: 1px solid #ddd; color: #222; letter-spacing: .1px; }
.all { padding-bottom: 2px; }
.mrow b { font-weight: 600; font-size: 13px; }
.sum { border-bottom: 0; border-top: 1px solid #ddd; font-size: 12.500px; letter-spacing: .25px; }
.auto { height: 21px; margin: 5px 6px 0; border: 1px solid #c8c8c8; display: flex; align-items: center; padding-left: 11px; gap: 7px; font-size: 11.500px; letter-spacing: -.1px; }
.auto i { margin-left: auto; width: 18px; height: 19px; border-left: 1px solid #ddd; display: flex; align-items: center; justify-content: center; }
.btns { display: grid; grid-template-columns: 43px 42px 43px; grid-auto-rows: 42px; gap: 6px 6px; margin: 6px 6px 0; font-size: 11px; line-height: 14px; color: #333; }
.btns div { border: 1px solid #d0d0d0; display: flex; flex-direction: column; align-items: center; gap: 5px; padding: 6px 1px 0 0; }
.pillrow { height: 20px; display: flex; align-items: center; padding-left: 13px; margin-top: 9px; position: relative; }
.pillrow span { height: 20px; width: 111px; border-radius: 10px; background: #d4d4d4; margin-left: 3px; padding-left: 10.500px; color: #222; line-height: 20px; letter-spacing: -.05px; }
.pillrow.two { margin-top: 3px; margin-bottom: 1px; }
.pillrow.two span { margin-left: 5px; }
.spin { position: absolute; left: 132px; top: -5px; }
.work { width: 899px; margin-left: 6px; }
.shelf { height: 28px; margin-bottom: 6px; border: 1px solid #d4d4d4; background: #fafafa; display: flex; align-items: center; gap: 2px; color: #555; }
.sl { width: 125px; height: 26px; border-right: 1px solid #d4d4d4; display: flex; align-items: center; padding-left: 6px; padding-bottom: 1px; gap: 7px; letter-spacing: 0; }
.pill { width: 148px; height: 20px; border-radius: 10px; background: #00b181; color: #fff; line-height: 19px; padding: 0 11px 0 10.500px; white-space: nowrap; letter-spacing: .25px; display: flex; align-items: center; justify-content: space-between; }
.pill.b { background: #4996b2; letter-spacing: .1px; }
.view { height: 519px; background: #eff7fa; border: 1px solid #d4d4d4; padding-left: 9px; }
h1 { margin: 0; height: 52px; line-height: 54px; font-size: 24px; font-weight: 600; text-align: center; color: #0055ff; padding-right: 10px; white-space: nowrap; letter-spacing: -.42px; }
.chart { display: flex; }
.plot { width: 863px; border-top: 1px solid #c8c8c8; }
.r { height: 20px; display: flex; line-height: 19px; }
.r > span { width: 160px; flex: none; text-align: right; padding-right: 5px; color: #6b6b6b; white-space: nowrap; letter-spacing: -.01px; }
.r > div { width: 351px; border-left: 1px solid #c8c8c8; display: flex; }
.r > div:last-child { width: 352px; border-right: 1px solid #c8c8c8; }
.r i { height: 15px; margin-top: 2px; flex: none; }
.r b { margin-left: 4px; color: #000; letter-spacing: .85px; height: 19px; }
.low { margin-top: 9px; } .low2 { margin-top: 18px; }
.axis { font-family: "Noto Sans", sans-serif; font-size: 12px; text-anchor: middle; overflow: visible; }
.tick { fill: #777; } .axt { fill: #333; }
.sc2 { height: 401px; margin-left: 4px; width: 16px; }
.sheets { height: 31px; background: #e6e6e6; border: solid #ccc; border-width: 1px 0; display: flex; color: #666; line-height: 29px; white-space: nowrap; }
.sheets > * { border-right: 1px solid #ccc; padding-left: 5px; display: flex; align-items: center; flex: none; }
.sheets b { background: #fafafa; color: #444; font-weight: 600; line-height: 27px; padding-bottom: 2px; letter-spacing: .15px; }
.ds { width: 131px; gap: 5px; } .ds { padding-left: 10px !important; } .s1 { width: 56px; padding-left: 6px !important; } .s { width: 57px; } .l1 { width: 63px; } .l2 { width: 60px; } .l3 { width: 62px; }
.d1, .d2, .st { gap: 4px; padding-left: 7px !important; letter-spacing: -.3px; } .d1 { width: 102px; } .d2 { width: 104px; }
.d1, .d2 { letter-spacing: -.25px; }
.st { width: 71px; } .n { width: 32px; padding-left: 9px !important; }
.status { height: 20px; background: #ebebeb; display: flex; align-items: center; padding-left: 3px; padding-bottom: 0; font-size: 11px; line-height: 18px; color: #222; white-space: nowrap; }
.status > span { padding-bottom: 2px; }
.status svg { margin-left: auto; }
.a1 { width: 65px; } .a2 { width: 127px; }
.taskbar { height: 40px; background: linear-gradient(rgba(255,255,255,.1), rgba(0,0,0,.08)), linear-gradient(90deg, #26938a 0, #339f93 30%, #2c998b 470px, #077062 550px, #046658 680px, #2d7f6e 705px, #24796a 730px, #046456 745px, #04685c 820px, #1d7b6a 850px, #1b7561 100%); display: flex; justify-content: space-between; align-items: center; }
.tray { display: flex; align-items: center; gap: 6px; padding-right: 12px; }
.clock { width: 62px; text-align: center; color: #fff; font: 12px/17px "Open Sans", sans-serif; letter-spacing: -.5px; padding-top: 1px; white-space: nowrap; }
.activate { position: absolute; left: 1055px; top: 649px; color: rgba(120,120,120,.55); font-family: "Open Sans", sans-serif; white-space: nowrap; }
.activate div { font-size: 18.500px; line-height: 25px; letter-spacing: .3px; }
.activate p { margin: 0; font-size: 13.500px; line-height: 21px; letter-spacing: .38px; }
```
